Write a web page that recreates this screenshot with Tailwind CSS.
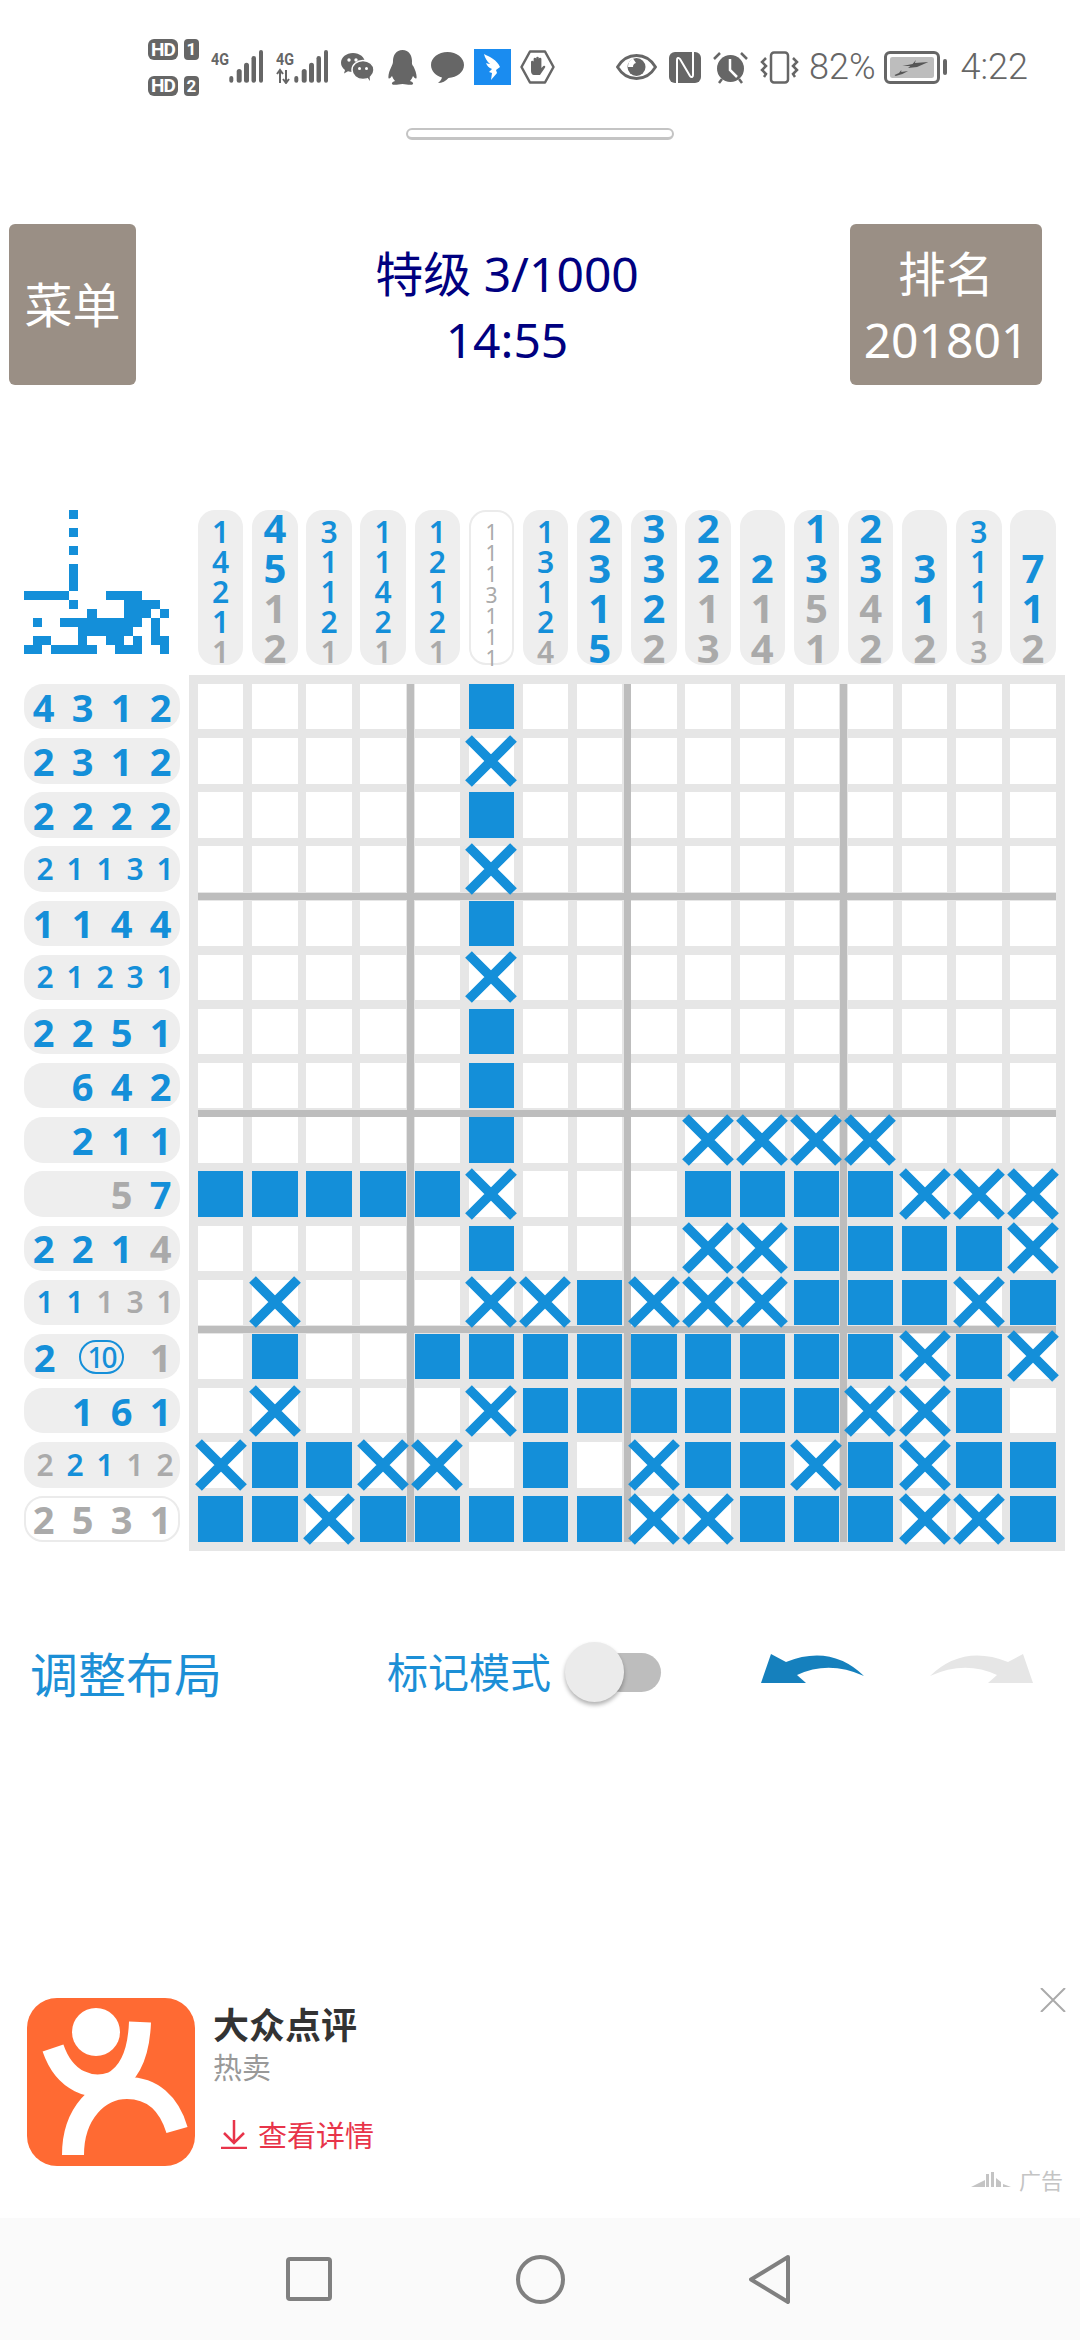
<!DOCTYPE html>
<html lang="zh">
<head>
<meta charset="UTF-8">
<title>数织</title>
<script src="https://cdn.jsdelivr.net/npm/@tailwindcss/browser@4"></script>
</head>
<body class="bg-white">
<div class="w-[1080px] h-[2340px] flex flex-col overflow-hidden bg-white font-['Noto_Sans','Noto_Sans_CJK_SC',sans-serif]">

  <!-- status bar -->
  <div class="h-[128px] pt-[36px] pl-[148px] shrink-0">
    <div class="h-[62px] flex items-center text-[#666666]">
      <div class="w-[51px] flex flex-col gap-[16px] font-['Roboto',sans-serif]">
        <div class="flex justify-between">
          <span class="w-[30px] h-[21px] rounded-[6px] bg-[#666666] text-white text-[19px] leading-[21px] font-bold text-center tracking-[-1px]">HD</span>
          <span class="w-[15px] h-[21px] rounded-[4px] bg-[#666666] text-white text-[17px] leading-[21px] font-bold text-center">1</span>
        </div>
        <div class="flex justify-between">
          <span class="w-[30px] h-[20px] rounded-[6px] bg-[#666666] text-white text-[19px] leading-[20px] font-bold text-center tracking-[-1px]">HD</span>
          <span class="w-[15px] h-[20px] rounded-[4px] bg-[#666666] text-white text-[17px] leading-[20px] font-bold text-center">2</span>
        </div>
      </div>
      <svg class="ml-[12px]" width="52" height="34" viewBox="0 0 52 34" fill="#666666">
        <text x="0" y="15" font-family="Roboto" font-weight="700" font-size="17" textLength="18" lengthAdjust="spacingAndGlyphs">4G</text>
        <rect x="18.3" y="26" width="4" height="6.7" rx="2"/><rect x="25.7" y="19" width="5" height="13.7" rx="2.5"/><rect x="33" y="12.7" width="5" height="20" rx="2.5"/><rect x="40.5" y="6" width="4.5" height="26.7" rx="2.2"/><rect x="48" y="0" width="4" height="32.7" rx="2"/>
      </svg>
      <svg class="ml-[13px]" width="53" height="34" viewBox="0 0 53 34" fill="#666666">
        <text x="0" y="15" font-family="Roboto" font-weight="700" font-size="17" textLength="18" lengthAdjust="spacingAndGlyphs">4G</text>
        <path d="M4 33V21M1 24l3-4 3 4M10 20v12M7 29l3 4 3-4" stroke="#666666" stroke-width="2" fill="none"/>
        <rect x="18.3" y="26" width="4" height="6.7" rx="2"/><rect x="25.7" y="19" width="5" height="13.7" rx="2.5"/><rect x="33" y="12.7" width="5" height="20" rx="2.5"/><rect x="40.5" y="6" width="4.5" height="26.7" rx="2.2"/><rect x="48" y="0" width="4" height="32.7" rx="2"/>
      </svg>
      <!-- wechat -->
      <svg class="ml-[12px]" width="33" height="28" viewBox="0 0 33 28">
        <path d="M12 0C5.400 0 0 4.300 0 9.800c0 3 1.600 5.400 4 7.200l-1 3.500 4-2.200c1.500.4 3.300.7 5 .6C20 19 24 14.500 24 9.800 24 4.300 18.600 0 12 0z" fill="#666666"/>
        <ellipse cx="22" cy="17" rx="11" ry="9.500" fill="#666666" stroke="#ffffff" stroke-width="1.500"/>
        <path d="M26 24l3 4-.5-6z" fill="#666666"/>
        <circle cx="8" cy="7" r="1.700" fill="#fff"/><circle cx="15" cy="7" r="1.700" fill="#fff"/><circle cx="18.500" cy="15.500" r="1.500" fill="#fff"/><circle cx="25.500" cy="15.500" r="1.500" fill="#fff"/>
      </svg>
      <!-- qq -->
      <svg class="ml-[14px]" width="29" height="35" viewBox="0 0 29 35" fill="#666666">
        <path d="M14.500 0C8 0 5 5.500 5 11c0 2-.5 3.500-1.500 5.500C1.500 20.500 0 25 .5 28c.5 1.500 2.500-.5 3.500-2 .7 2 1.700 3.700 3 5-2 .8-3.500 1.500-3 3 .5 1.200 5 1 10.500 0 5.500 1 10 1.200 10.500 0 .5-1.500-1-2.200-3-3 1.300-1.300 2.300-3 3-5 1 1.500 3 3.500 3.500 2 .5-3-1-7.500-3-11.500C23.500 14.500 24 13 24 11c0-5.500-3-11-9.500-11z"/>
      </svg>
      <!-- message -->
      <svg class="ml-[14px]" width="33" height="31" viewBox="0 0 33 31" fill="#666666">
        <path d="M16.500 0C7.400 0 0 5.800 0 13c0 6 5 11 11 12.500-.5 2-2 4-4 5.500 4 0 8-2 10.500-5C26 25.500 33 20 33 13 33 5.800 25.600 0 16.500 0z"/>
      </svg>
      <!-- blue wing app -->
      <svg class="ml-[10px]" width="37" height="36" viewBox="0 0 37 36">
        <rect width="37" height="36" fill="#1a8cf0"/>
        <path d="M10 5c6 3 13 6 16 13l-4 3 1 3-6 7 1-7-3-1 3-3c-3-1-5-3-6-6 2 .8 3.500 1 4 1-3-2.500-5-6-6-10z" fill="#ffffff"/>
      </svg>
      <!-- hand -->
      <svg class="ml-[9px]" width="35" height="34" viewBox="0 0 35 34">
        <path d="M10 1.500h15L33.500 17 25 32.500H10L1.500 17z" fill="none" stroke="#666666" stroke-width="2.500" stroke-linejoin="round"/>
        <path d="M11 17v-5a1.300 1.300 0 0 1 2.600 0V9a1.300 1.300 0 0 1 2.600 0V8a1.300 1.300 0 0 1 2.600 0v1a1.300 1.300 0 0 1 2.600 0v9l2-2c1.500-1 2.500 .5 1.500 1.700L20 25h-6c-2 0-3-2-3-4z" fill="#666666"/>
      </svg>
      <!-- eye -->
      <svg class="ml-[61px]" width="41" height="26" viewBox="0 0 41 26">
        <path d="M1.500 13C6 5.500 13 1.500 20.500 1.500S35 5.500 39.500 13C35 20.500 28 24.500 20.500 24.500S6 20.500 1.500 13z" fill="none" stroke="#666666" stroke-width="2.800"/>
        <circle cx="20.500" cy="13" r="9" fill="#666666"/>
        <path d="M17 4.500a9 9 0 0 0-5 8.500h5a4 4 0 0 1 3-4z" fill="#ffffff"/>
      </svg>
      <!-- nfc -->
      <svg class="ml-[12px]" width="32" height="31" viewBox="0 0 32 31">
        <rect width="32" height="31" rx="6" fill="#666666"/>
        <path d="M8 31V8c0-2 1.500-3 3-1l10 17c1.500 2 3 1 3-1V0" fill="none" stroke="#ffffff" stroke-width="2"/>
      </svg>
      <!-- alarm -->
      <svg class="ml-[12px]" width="35" height="33" viewBox="0 0 35 33">
        <circle cx="17.500" cy="17.500" r="13.500" fill="#666666"/>
        <path d="M17 8v11l7 7" fill="none" stroke="#ffffff" stroke-width="2.500"/>
        <path d="M1 8l6-6M34 8l-6-6M6 32l3-4M29 32l-3-4" stroke="#666666" stroke-width="2.500"/>
      </svg>
      <!-- vibrate -->
      <svg class="ml-[12px]" width="39" height="33" viewBox="0 0 39 33" fill="none" stroke="#666666">
        <rect x="11" y="1.500" width="17" height="30" rx="3" stroke-width="2.500"/>
        <path d="M6 7L2 11l4 4-4 4 4 4-2 3M33 7l4 4-4 4 4 4-4 4 2 3" stroke-width="2.500"/>
      </svg>
      <span class="ml-[10px] text-[36px] leading-none font-light font-['Roboto',sans-serif]">82%</span>
      <!-- battery -->
      <div class="ml-[8px] flex items-center gap-[3px]">
        <div class="w-[56px] h-[33px] border-[3px] border-[#666666] rounded-[6px] p-[3px] flex">
          <svg class="flex-1" viewBox="0 0 39 21" preserveAspectRatio="none">
            <rect width="39" height="21" rx="2" fill="#bdbdbd"/>
            <path d="M11 9l9-2 3-4-1 3 12-1-10 5-8 1 2-2zM4 18l4-2 2-3 0 2 6-1-5 3-6 2z" fill="#555555"/>
          </svg>
        </div>
        <div class="w-[4px] h-[16px] rounded-full bg-[#666666]"></div>
      </div>
      <span class="ml-[14px] text-[36px] leading-none font-light font-['Roboto',sans-serif]">4:22</span>
    </div>
  </div>

  <!-- drag handle -->
  <div class="w-[268px] h-[12px] ml-[406px] shrink-0 rounded-full bg-white border-2 border-[#c4c4c4] border-b-[3px]"></div>

  <!-- header -->
  <div class="h-[161px] mt-[84px] pl-[9px] pr-[38px] flex items-stretch shrink-0">
    <div class="w-[127px] rounded-[6px] bg-[#9a8f85] text-white text-[48px] leading-none flex items-center justify-center">菜单</div>
    <div class="text-[#000080] text-[48px] leading-[66px] text-center pt-[17px] flex-1 pl-[28px]">
      <div>特级 3/1000</div>
      <div>14:55</div>
    </div>
    <div class="w-[192px] rounded-[6px] bg-[#9a8f85] text-white text-[48px] leading-[66px] text-center pt-[17px]">
      <div>排名</div>
      <div>201801</div>
    </div>
  </div>

  <!-- board -->
  <div class="mt-[125px] pl-[24px] shrink-0">
    <div class="flex h-[165px]">
      <div id="preview" class="w-[145px] h-[144px] grid grid-cols-[repeat(16,1fr)] auto-rows-[9px]"></div>
      <div id="colClues" class="ml-[29px] h-[155px] grid grid-cols-[repeat(16,45.4px)] grid-rows-[155px] gap-x-[8.77px]"></div>
    </div>
    <div class="flex">
      <div id="rowClues" class="w-[156px] py-[9px] grid grid-cols-[156px] auto-rows-[45.4px] gap-y-[8.77px]"></div>
      <div id="grid" class="relative ml-[9px] w-[876px] h-[876px] p-[9px] bg-[#e6e6e6] grid grid-cols-[repeat(16,45.4px)] auto-rows-[45.4px] gap-[8.77px]"></div>
    </div>
  </div>

  <!-- controls -->
  <div class="mt-[88px] h-[66px] pl-[30px] flex items-center shrink-0">
    <span class="text-[48px] leading-none text-[#1c8fd6] pt-[6px]">调整布局</span>
    <span class="ml-[165px] text-[41px] leading-none text-[#1c8fd6]">标记模式</span>
    <div class="relative ml-[14px] w-[96px] h-[39px]">
      <div class="absolute right-0 top-0 w-[60px] h-[39px] rounded-full bg-[#bdbdbd]"></div>
      <div class="absolute left-0 -top-[11px] w-[59px] h-[60px] rounded-full bg-[#ebebeb] shadow-[0_3px_4px_rgba(0,0,0,0.3)]"></div>
    </div>
    <svg class="ml-[100px] -mt-[6px]" width="103" height="30" viewBox="0 0 103 30"><path d="M10 0L0 29h45l-9-8Q68 6 103 22 70-10 25 8z" fill="#1580bd"/></svg>
    <svg class="ml-[66px] -mt-[6px]" width="103" height="30" viewBox="0 0 103 30"><path d="M93 0l10 29H58l9-8Q35 6 0 22 33-10 78 8z" fill="#e6e6e6"/></svg>
  </div>

  <!-- ad -->
  <div class="relative mt-[293px] h-[168px] pl-[27px] flex shrink-0">
    <svg width="168" height="168" viewBox="0 0 168 168">
      <rect width="168" height="168" rx="30" fill="#ff6a33"/>
      <ellipse cx="69" cy="34" rx="24" ry="24" fill="#ffffff"/>
      <g fill="none" stroke="#ffffff" stroke-width="22">
        <path d="M26 50C38 85 65 92 85 85 105 75 112 50 113 24"/>
        <path d="M46 157C46 115 72 90 100 90 125 90 142 105 150 132"/>
      </g>
    </svg>
    <div class="ml-[18px] flex flex-col">
      <span class="mt-[10px] text-[36px] leading-[36px] font-bold text-[#333333]">大众点评</span>
      <span class="mt-[6px] text-[29px] leading-[36px] text-[#999999]">热卖</span>
      <div class="mt-[32px] flex items-center">
        <svg class="ml-[7px] -mt-[4px]" width="28" height="29" viewBox="0 0 28 29" fill="none" stroke="#e8344a" stroke-width="2.500"><path d="M14 0v22M4 13l10 10 10-10M1 28h26"/></svg>
        <span class="ml-[10px] text-[29px] leading-[36px] text-[#e8344a]">查看详情</span>
      </div>
    </div>
    <svg class="absolute left-[1040px] -top-[10px]" width="26" height="24" viewBox="0 0 26 24" stroke="#aaaaaa" stroke-width="2"><path d="M1 0l24 24M25 0L1 24"/></svg>
    <div class="absolute left-[971px] top-[171px] flex items-center gap-[8px]">
      <svg width="40" height="16" viewBox="0 0 40 16" fill="#c4c4c4"><path d="M0 15L14 8V15zM15 2l3 0V15H15zM20 0h3V15H20zM25 6l5 4V15H25zM32 12l8 3H32z"/></svg>
      <span class="text-[22px] leading-[22px] text-[#c4c4c4]">广告</span>
    </div>
  </div>

  <!-- nav bar -->
  <div class="mt-auto h-[122px] bg-[#fafafa] pl-[286px] flex items-center shrink-0">
    <div class="w-[46px] h-[44px] border-[4px] border-[#808080] rounded-[4px]"></div>
    <div class="ml-[184px] w-[49px] h-[49px] border-[4px] border-[#808080] rounded-full"></div>
    <svg class="ml-[184px]" width="42" height="49" viewBox="0 0 42 49" fill="none" stroke="#808080" stroke-width="4" stroke-linejoin="round"><path d="M39 2L2 24.500 39 47z"/></svg>
  </div>
</div>

<script>
const board = [
  ".....#..........",
  ".....x..........",
  ".....#..........",
  ".....x..........",
  ".....#..........",
  ".....x..........",
  ".....#..........",
  ".....#..........",
  ".....#...xxxx...",
  "#####x...####xxx",
  ".....#...xx####x",
  ".x...xx#xxx###x#",
  ".#..#########x#x",
  ".x...x######xx#.",
  "x##xx.#.x##x#x##",
  "##x#####xx###xx#"
];

// digits, then b = blue / g = gray for each digit
const cols = [
  ["14211","bbbbg"],["4512","bbgg"],["31121","bbbbg"],["11421","bbbbg"],
  ["12121","bbbbg"],["1113111","ggggggg"],["13124","bbbbg"],["2315","bbbb"],
  ["3322","bbbg"],["2213","bbgg"],["214","bgg"],["1351","bbgg"],
  ["2342","bbgg"],["312","bbg"],["31113","bbbgg"],["712","bbg"]
];
const rows = [
  ["4312","bbbb"],["2312","bbbb"],["2222","bbbb"],["21131","bbbbb"],
  ["1144","bbbb"],["21231","bbbbb"],["2251","bbbb"],["642","bbb"],
  ["211","bbb"],["57","gb"],["2214","bbbg"],["11131","bbggg"],
  null,["161","bbb"],["22112","gbbgg"],["2531","gggg"]
];
const tone = { b: "text-[#148fd9]", g: "text-[#aaaaaa]" };

let html = "";
board.forEach(r => [...r].forEach(c => {
  html += c === "#" ? '<div class="bg-[#148fd9]"></div>' : '<div></div>';
}));
document.getElementById("preview").innerHTML = html;

html = "";
cols.forEach(([d, m]) => {
  const size = d.length === 7 ? "text-[21px] leading-[21px] font-normal translate-y-[4px]"
    : d.length === 5 ? "text-[30px] leading-[30px] font-semibold translate-y-[1.5px]"
    : "text-[40px] leading-[40px] font-bold translate-y-[2.5px]";
  const pill = d.length === 7 ? "bg-white outline-2 -outline-offset-2 outline-[#ebebeb]" : "bg-[#eeeeee]";
  html += `<div class="h-[155px] rounded-[17px] flex flex-col justify-end items-center ${pill}">`;
  [...d].forEach((n, i) => { html += `<span class="${size} ${tone[m[i]]}">${n}</span>`; });
  html += "</div>";
});
document.getElementById("colClues").innerHTML = html;

html = "";
rows.forEach((row, idx) => {
  const pill = idx === 15 ? "bg-white outline-2 -outline-offset-2 outline-[#ebebeb]" : "bg-[#eeeeee]";
  html += `<div class="rounded-[19px] flex items-center justify-end ${pill}">`;
  if (!row) {
    // row 13 has the two digit clue in a ring
    html += '<span class="w-[39px] text-center text-[38px] leading-none font-bold text-[#148fd9] mr-auto ml-[1px]">2</span>';
    html += '<span class="w-[45px] h-[34px] rounded-full border-2 border-[#148fd9] text-center text-[28px] leading-[30px] tracking-[-2px] text-[#148fd9] font-medium">10</span>';
    html += '<span class="w-[39px] ml-[17px] text-center text-[38px] leading-none font-bold text-[#aaaaaa]">1</span>';
  } else {
    const five = row[0].length === 5;
    [...row[0]].forEach((n, i) => {
      const size = five ? "w-[30px] text-[30px] font-semibold" : "w-[39px] text-[38px] font-bold";
      html += `<span class="${size} text-center leading-none ${tone[row[1][i]]}">${n}</span>`;
    });
  }
  html += "</div>";
});
document.getElementById("rowClues").innerHTML = html;

const cross = '<svg class="absolute -left-[3.5px] -top-[3.5px] z-10" width="52" height="52" viewBox="0 0 52 52" stroke="#148fd9" stroke-width="9.5"><path d="M3.500 3.500l45 45M48.500 3.500l-45 45"/></svg>';
html = "";
board.forEach(r => [...r].forEach(c => {
  if (c === "#") html += '<div class="bg-[#148fd9]"></div>';
  else if (c === "x") html += `<div class="relative bg-white">${cross}</div>`;
  else html += '<div class="bg-white"></div>';
}));
// heavier lines every 4 cells
[217.8, 434.5, 651.2].forEach(p => {
  html += `<div class="absolute top-[9px] bottom-[9px] w-[7px] bg-[#bdbdbd]" style="left:${p}px"></div>`;
  html += `<div class="absolute left-[9px] right-[9px] h-[7px] bg-[#bdbdbd]" style="top:${p}px"></div>`;
});
document.getElementById("grid").innerHTML = html;
</script>
</body>
</html>
